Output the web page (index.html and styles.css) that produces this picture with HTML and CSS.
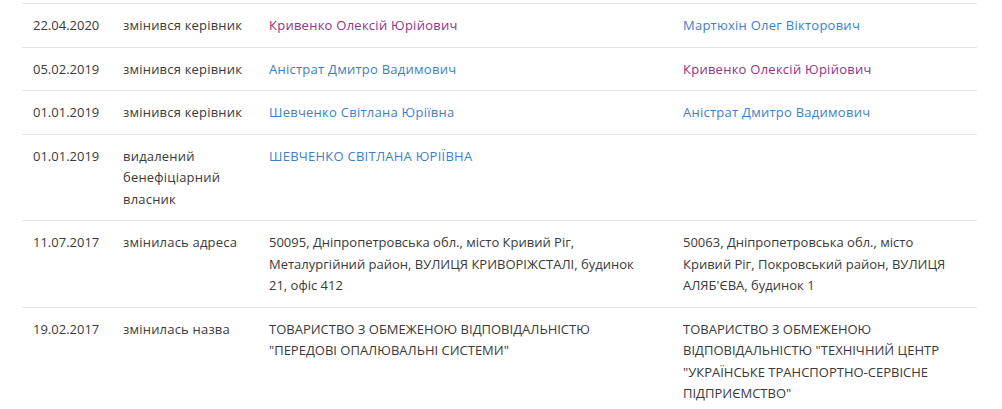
FILE: index.html
```html
<!DOCTYPE html>
<html lang="uk">
<head>
<meta charset="utf-8">
<link rel="stylesheet" href="styles.css">
</head>
<body>
<div class="page">
  <div class="history">
    <div class="row">
      <div class="cell date">22.04.2020</div>
      <div class="cell type">змінився керівник</div>
      <div class="cell old"><a class="link visited" href="#">Кривенко Олексій Юрійович</a></div>
      <div class="cell new"><a class="link" href="#">Мартюхін Олег Вікторович</a></div>
    </div>
    <div class="row">
      <div class="cell date">05.02.2019</div>
      <div class="cell type">змінився керівник</div>
      <div class="cell old"><a class="link" href="#">Аністрат Дмитро Вадимович</a></div>
      <div class="cell new"><a class="link visited" href="#">Кривенко Олексій Юрійович</a></div>
    </div>
    <div class="row">
      <div class="cell date">01.01.2019</div>
      <div class="cell type">змінився керівник</div>
      <div class="cell old"><a class="link" href="#">Шевченко Світлана Юріївна</a></div>
      <div class="cell new"><a class="link" href="#">Аністрат Дмитро Вадимович</a></div>
    </div>
    <div class="row">
      <div class="cell date">01.01.2019</div>
      <div class="cell type">видалений бенефіціарний власник</div>
      <div class="cell old"><a class="link" href="#">ШЕВЧЕНКО СВІТЛАНА ЮРІЇВНА</a></div>
      <div class="cell new"></div>
    </div>
    <div class="row">
      <div class="cell date">11.07.2017</div>
      <div class="cell type">змінилась адреса</div>
      <div class="cell old">50095, Дніпропетровська обл., місто Кривий Ріг, Металургійний район, ВУЛИЦЯ КРИВОРІЖСТАЛІ, будинок 21, офіс 412</div>
      <div class="cell new">50063, Дніпропетровська обл., місто Кривий Ріг, Покровський район, ВУЛИЦЯ АЛЯБ'ЄВА, будинок 1</div>
    </div>
    <div class="row">
      <div class="cell date">19.02.2017</div>
      <div class="cell type">змінилась назва</div>
      <div class="cell old">ТОВАРИСТВО З ОБМЕЖЕНОЮ ВІДПОВІДАЛЬНІСТЮ "ПЕРЕДОВІ ОПАЛЮВАЛЬНІ СИСТЕМИ"</div>
      <div class="cell new">ТОВАРИСТВО З ОБМЕЖЕНОЮ ВІДПОВІДАЛЬНІСТЮ "ТЕХНІЧНИЙ ЦЕНТР "УКРАЇНСЬКЕ ТРАНСПОРТНО-СЕРВІСНЕ ПІДПРИЄМСТВО"</div>
    </div>
  </div>
</div>
</body>
</html>
```

FILE: styles.css
```css
html, body {
  margin: 0;
  padding: 0;
  background: #ffffff;
}

body {
  font-family: "Open Sans", "Noto Sans", sans-serif;
  font-size: 13px;
  line-height: 21.5px;
  color: #3a3a3a;
  overflow: hidden;
}

.page {
  padding: 3px 25px 0 22px;
}

.history {
  display: flex;
  flex-direction: column;
  border-top: 1px solid #e4e4e4;
}

.row {
  display: grid;
  grid-template-columns: 90px 146px 414px 1fr;
  border-bottom: 1px solid #e4e4e4;
}

.cell {
  padding: 11px 11px 10px 11px;
}

.type {
  letter-spacing: 0.2px;
}

.old {
  padding-right: 22px;
}

.new {
  padding-right: 22px;
}

.link {
  color: #3d7fcc;
  text-decoration: none;
  letter-spacing: 0.25px;
}

.link.visited {
  color: #8e3485;
}
```
